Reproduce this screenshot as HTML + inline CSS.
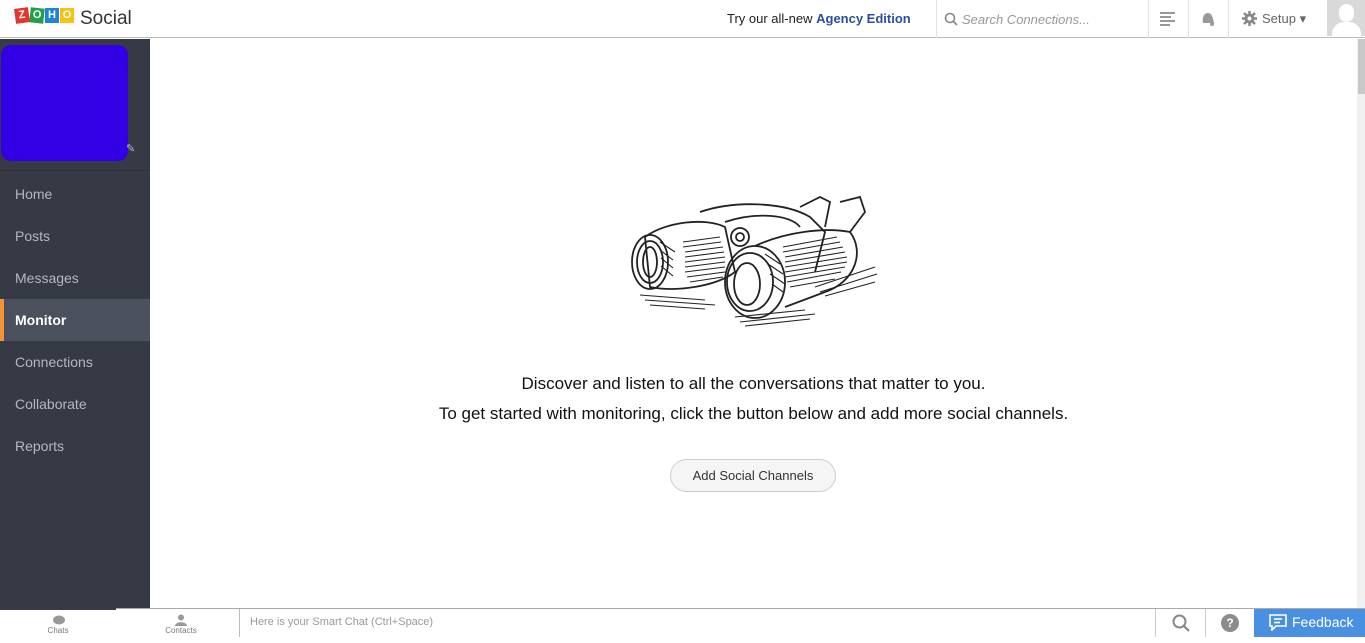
<!DOCTYPE html>
<html><head><meta charset="utf-8"><style>
*{margin:0;padding:0;box-sizing:border-box}
body{width:1365px;height:643px;overflow:hidden;background:#fff;font-family:"Liberation Sans",sans-serif;position:relative}
.top{position:absolute;left:0;top:0;width:1365px;height:38px;border-bottom:1px solid #bcbcbc;background:#fff}
.logo{position:absolute;left:15px;top:8px;display:flex}
.logo span{display:inline-block;width:14px;height:15px;color:#fff;font-weight:bold;font-size:11px;text-align:center;line-height:15px;margin-right:1px}
.social{position:absolute;left:80px;top:8px;font-size:19px;color:#333}
.try{position:absolute;left:727px;top:11px;font-size:13px;color:#222}
.try b{color:#2a4f9e}
.sep{position:absolute;top:0;width:1px;height:38px;background:#e2e2e2}
.search{position:absolute;left:962px;top:12px;font-size:13px;color:#999;font-style:italic}
.side{position:absolute;left:0;top:39px;width:150px;height:569px;background:#353a45}
.avatar{position:absolute;left:1px;top:6px;width:127px;height:116px;background:#3300e6;border-radius:10px}
.nav{position:absolute;left:0;width:150px;height:42px;line-height:42px;padding-left:15px;font-size:14px;color:#b4b8bf}
.nav.act{background:#4b515c;color:#fff;font-weight:bold;border-left:4px solid #f39237;padding-left:11px}
.msg{position:absolute;left:150px;width:1207px;text-align:center;font-size:17px;color:#111}
.btn{position:absolute;left:670px;top:459px;width:166px;height:33px;border:1px solid #ccc;border-radius:17px;background:#f5f5f5;font-size:13px;color:#333;text-align:center;line-height:31px}
.scroll{position:absolute;left:1357px;top:39px;width:8px;height:569px;background:#f0f0f0}
.scroll div{position:absolute;left:1px;top:0;width:7px;height:55px;background:#c8c8c8}
.bot{position:absolute;left:0;top:608px;width:1365px;height:28px;border-top:1px solid #aaa;background:#fff}
.bl{position:absolute;font-size:8px;color:#777;text-align:center}
</style></head><body>
<div class="top">
 <div class="logo"><span style="background:#e0362c;transform:rotate(-8deg)">Z</span><span style="background:#1fa14a;transform:rotate(6deg)">O</span><span style="background:#1f84d4">H</span><span style="background:#f7c212">O</span></div>
 <div class="social">Social</div>
 <div class="try">Try our all-new <b>Agency Edition</b></div>
 <div class="sep" style="left:936px"></div>
 <svg style="position:absolute;left:944px;top:12px" width="14" height="14"><circle cx="6" cy="6" r="4.5" fill="none" stroke="#888" stroke-width="1.6"/><line x1="9.5" y1="9.5" x2="13" y2="13" stroke="#888" stroke-width="1.8"/></svg>
 <div class="search">Search Connections...</div>
 <div class="sep" style="left:1148px"></div>
 <svg style="position:absolute;left:1160px;top:11px" width="16" height="16"><g stroke="#777" stroke-width="1.5"><line x1="0" y1="2" x2="15" y2="2"/><line x1="0" y1="6" x2="11" y2="6"/><line x1="0" y1="10" x2="15" y2="10"/><line x1="0" y1="14" x2="10" y2="14"/></g></svg>
 <div class="sep" style="left:1188px"></div>
 <svg style="position:absolute;left:1200px;top:11px" width="16" height="16"><path d="M3 12 C2 6 4 2 8 2 C12 2 13 7 14 12 Z" fill="#999"/><circle cx="12" cy="13" r="2" fill="#999"/></svg>
 <div class="sep" style="left:1228px"></div>
 <svg style="position:absolute;left:1242px;top:11px" width="15" height="15"><circle cx="7.5" cy="7.5" r="5" fill="#888"/><g stroke="#888" stroke-width="2.5"><line x1="7.5" y1="0" x2="7.5" y2="15"/><line x1="0" y1="7.5" x2="15" y2="7.5"/><line x1="2" y1="2" x2="13" y2="13"/><line x1="13" y1="2" x2="2" y2="13"/></g><circle cx="7.5" cy="7.5" r="2" fill="#fff"/></svg>
 <div style="position:absolute;left:1262px;top:11px;font-size:13px;color:#666">Setup ▾</div>
 <div style="position:absolute;left:1327px;top:0;width:38px;height:36px;background:#d9d9d9;overflow:hidden"><div style="position:absolute;left:12px;top:4px;width:15px;height:18px;border-radius:8px;background:#fff"></div><div style="position:absolute;left:5px;top:22px;width:29px;height:20px;border-radius:12px 12px 0 0;background:#fff"></div></div>
</div>
<div class="side">
 <div class="avatar"></div>
 <div style="position:absolute;left:126px;top:103px;color:#bbb;font-size:11px">✎</div>
 <div style="position:absolute;left:0;top:131px;width:150px;height:1px;background:#2d313a"></div>
 <div class="nav" style="top:134px">Home</div>
 <div class="nav" style="top:176px">Posts</div>
 <div class="nav" style="top:218px">Messages</div>
 <div class="nav act" style="top:260px">Monitor</div>
 <div class="nav" style="top:302px">Connections</div>
 <div class="nav" style="top:344px">Collaborate</div>
 <div class="nav" style="top:386px">Reports</div>
</div>
<svg style="position:absolute;left:625px;top:192px" width="260" height="135" viewBox="0 0 260 135" fill="none" stroke="#222" stroke-width="1.8">
 <path d="M20 45 C40 30 80 25 100 35 L110 80 C90 95 50 100 25 95 Z"/>
 <ellipse cx="25" cy="70" rx="18" ry="27"/><ellipse cx="25" cy="70" rx="13" ry="21"/><ellipse cx="25" cy="70" rx="7" ry="15"/>
 <path d="M75 20 C110 8 160 10 185 25 L200 40 L190 80"/>
 <path d="M100 30 C130 20 165 22 175 35"/>
 <ellipse cx="115" cy="45" rx="9" ry="9"/><ellipse cx="115" cy="45" rx="4" ry="4"/>
 <path d="M175 15 L195 5 L205 10 L200 35 M215 10 L235 5 L240 20 L225 40"/>
 <ellipse cx="130" cy="90" rx="30" ry="36"/><ellipse cx="125" cy="90" rx="23" ry="29"/><ellipse cx="122" cy="92" rx="13" ry="21"/>
 <path d="M130 54 C160 40 200 35 225 40 C240 60 230 90 200 100 L160 115"/>
 <g stroke-width="1.1"><path d="M58 50 L95 45 M58 55 L96 50 M60 60 L98 55 M60 65 L99 60 M60 70 L100 65 M60 75 L100 70 M60 80 L100 75 M62 85 L100 80 M65 90 L98 85"/><path d="M158 55 L212 45 M158 60 L215 50 M160 65 L218 55 M160 70 L220 60 M160 75 L222 65 M160 80 L222 70 M160 85 L220 75 M162 90 L216 80 M165 95 L210 87"/><path d="M15 103 L80 108 M20 108 L90 113 M25 113 L80 117 M110 125 L180 118 M115 130 L190 122 M120 134 L185 127 M190 95 L250 75 M195 100 L252 82 M200 104 L250 90"/><path d="M35 50 L50 60 M35 58 L48 68 M36 66 L48 76 M36 74 L48 84 M140 62 L155 72 M143 72 L158 82 M145 82 L160 92 M147 92 L158 100"/></g>
</svg>
<div class="msg" style="top:374px">Discover and listen to all the conversations that matter to you.</div>
<div class="msg" style="top:404px">To get started with monitoring, click the button below and add more social channels.</div>
<div class="btn">Add Social Channels</div>
<div class="scroll"><div></div></div>
<div class="bot">
 <div style="position:absolute;left:0;top:-1px;width:116px;height:2px;background:#353a45"></div>
 <svg style="position:absolute;left:52px;top:6px" width="14" height="11"><ellipse cx="7" cy="5" rx="6" ry="4.5" fill="#999"/></svg>
 <div class="bl" style="left:40px;top:17px;width:36px">Chats</div>
 <svg style="position:absolute;left:175px;top:5px" width="12" height="12"><circle cx="6" cy="3.5" r="3" fill="#999"/><path d="M0 12 C0 7 12 7 12 12Z" fill="#999"/></svg>
 <div class="bl" style="left:160px;top:17px;width:42px">Contacts</div>
 <div style="position:absolute;left:239px;top:0;width:1px;height:28px;background:#bbb"></div>
 <div style="position:absolute;left:250px;top:7px;font-size:11px;color:#999">Here is your Smart Chat (Ctrl+Space)</div>
 <div style="position:absolute;left:1155px;top:0;width:1px;height:28px;background:#ccc"></div>
 <svg style="position:absolute;left:1172px;top:5px" width="18" height="18"><circle cx="7.5" cy="7.5" r="6" fill="none" stroke="#888" stroke-width="2"/><line x1="12" y1="12" x2="17" y2="17" stroke="#888" stroke-width="2.2"/></svg>
 <div style="position:absolute;left:1205px;top:0;width:1px;height:28px;background:#ccc"></div>
 <div style="position:absolute;left:1221px;top:5px;width:18px;height:18px;border-radius:9px;background:#8c8c8c;color:#fff;font-size:12px;font-weight:bold;text-align:center;line-height:18px">?</div>
 <div style="position:absolute;left:1254px;top:0;width:111px;height:28px;background:#4a90e2;color:#fff;font-size:14px;line-height:26px;padding-left:38px">Feedback</div>
 <svg style="position:absolute;left:1269px;top:5px" width="18" height="17" fill="none" stroke="#fff" stroke-width="1.6"><path d="M1 1 H17 V12 H7 L3 16 V12 H1 Z"/><line x1="5" y1="5" x2="13" y2="5"/><line x1="5" y1="8.5" x2="11" y2="8.5"/></svg>
</div>
</body></html>
